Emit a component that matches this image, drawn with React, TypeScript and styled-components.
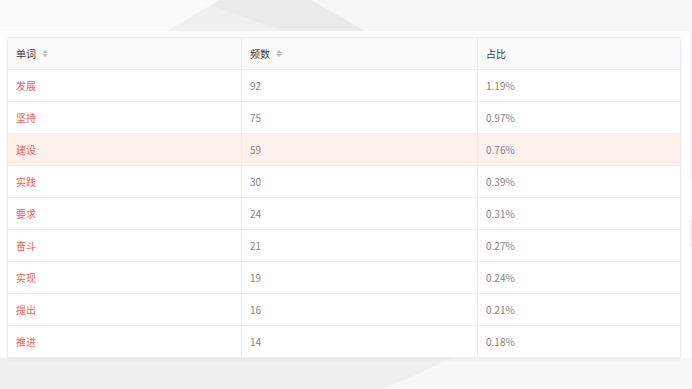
import React from "react";
import styled, { createGlobalStyle } from "styled-components";

const GlobalStyle = createGlobalStyle`
  html, body {
    margin: 0;
    padding: 0;
  }
  body {
    font-family: "Noto Sans CJK SC", "Noto Sans", sans-serif;
    background-color: #f0f0f0;
    background-image:
      linear-gradient(150deg, rgba(255,255,255,0.75) 0 16%, transparent 16.2%),
      linear-gradient(30deg, transparent 0 72%, rgba(255,255,255,0.6) 72.2%),
      linear-gradient(200deg, rgba(232,232,232,0.7) 0 28%, transparent 28.2%),
      linear-gradient(335deg, rgba(255,255,255,0.55) 0 20%, transparent 20.2%);
    min-height: 389px;
  }
`;

const rows = [
  { word: "发展", count: 92, ratio: "1.19%" },
  { word: "坚持", count: 75, ratio: "0.97%" },
  { word: "建设", count: 59, ratio: "0.76%", active: true },
  { word: "实践", count: 30, ratio: "0.39%" },
  { word: "要求", count: 24, ratio: "0.31%" },
  { word: "奋斗", count: 21, ratio: "0.27%" },
  { word: "实现", count: 19, ratio: "0.24%" },
  { word: "提出", count: 16, ratio: "0.21%" },
  { word: "推进", count: 14, ratio: "0.18%" },
];

const Page = styled.div`
  padding-top: 31px;
  height: 389px;
  box-sizing: border-box;
`;

const Panel = styled.div`
  width: 690px;
  background: #ffffff;
  padding: 6px 9px 0 7px;
  box-sizing: border-box;
`;

const Table = styled.div`
  border: 1px solid #ebeef5;
  border-bottom: none;
  border-radius: 4px 4px 0 0;
  box-shadow: 0 1px 4px rgba(0, 0, 0, 0.06);
  overflow: hidden;
`;

const Row = styled.div<{ $head?: boolean; $active?: boolean }>`
  display: grid;
  grid-template-columns: 234px 236px 1fr;
  height: 32px;
  box-sizing: border-box;
  border-bottom: 1px solid #ebeef5;
  background: ${(p) => (p.$head ? "#fafafa" : p.$active ? "#fdf1ed" : "#ffffff")};
`;

const Cell = styled.div<{ $head?: boolean }>`
  display: flex;
  align-items: center;
  padding: 0 0 1px 8px;
  font-size: 10px;
  font-weight: 400;
  color: ${(p) => (p.$head ? "#3a3a3a" : "#858585")};
  border-right: 1px solid #ebeef5;
  &:last-child {
    border-right: none;
  }
`;

const Word = styled.span`
  color: #f4605a;
`;

const SortIcon = styled.span`
  display: inline-flex;
  flex-direction: column;
  gap: 1px;
  margin-left: 6px;
  &::before,
  &::after {
    content: "";
    border-left: 3px solid transparent;
    border-right: 3px solid transparent;
  }
  &::before {
    border-bottom: 3px solid #bfc2c8;
  }
  &::after {
    border-top: 3px solid #bfc2c8;
  }
`;

export default function App() {
  return (
    <>
      <GlobalStyle />
      <Page>
        <Panel>
          <Table>
            <Row $head>
              <Cell $head>
                单词
                <SortIcon />
              </Cell>
              <Cell $head>
                频数
                <SortIcon />
              </Cell>
              <Cell $head>占比</Cell>
            </Row>
            {rows.map((r) => (
              <Row key={r.word} $active={r.active}>
                <Cell>
                  <Word>{r.word}</Word>
                </Cell>
                <Cell>{r.count}</Cell>
                <Cell>{r.ratio}</Cell>
              </Row>
            ))}
          </Table>
        </Panel>
      </Page>
    </>
  );
}
